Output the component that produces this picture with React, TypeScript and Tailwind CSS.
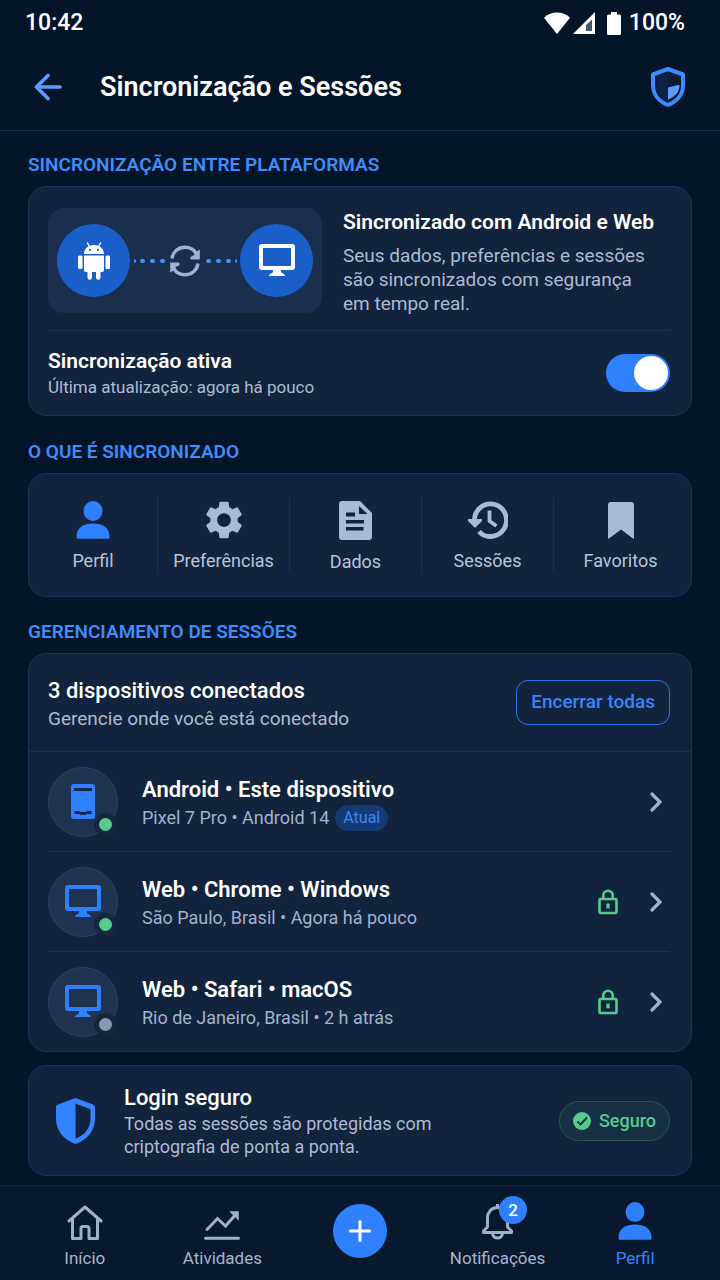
import { useState } from "react";
import type { ReactNode } from "react";

const BackIcon = () => (
  <svg width="28" height="28" viewBox="0 0 28 28" fill="none" stroke="#5a9cff" strokeWidth="3.600" strokeLinecap="round" strokeLinejoin="round">
    <path d="M26 14H3M14 2.500L2.500 14 14 25.500" />
  </svg>
);

const HeaderShieldIcon = () => (
  <svg width="34" height="40" viewBox="0 0 34 40">
    <path d="M17 2L32 7.500v11c0 9-6 16-15 19.500C8 34.500 2 27.500 2 18.500v-11z" fill="#0a1c37" stroke="#3a8cff" strokeWidth="4" strokeLinejoin="round" />
    <path d="M17 6.500v27c-7-3.200-11-8-11-15V10.300z" fill="#0c2247" />
    <path d="M17 20.500l11.500-2.800c0 7.500-4 11.300-11.500 15z" fill="#5b9dff" />
  </svg>
);

const ShieldIcon = () => (
  <svg width="39" height="46" viewBox="0 0 39 46">
    <path fillRule="evenodd" d="M19.500 0L37 6.500q2 .8 2 2.500v11.500C39 33 31 42 19.500 46 8 42 0 33 0 20.500V9q0-1.700 2-2.500zM19.500 5.500v35.300C29 37 34.500 30 34.500 20.500v-9.300z" fill="#3584ff" />
  </svg>
);

const WifiIcon = () => (
  <svg width="26" height="22" viewBox="0 0 26 22" fill="#fff">
    <path d="M13 22L0 5.800C4 2 8.200.5 13 .5S22 2 26 5.800z" />
  </svg>
);

const SignalIcon = () => (
  <svg width="22" height="22" viewBox="0 0 22 22">
    <path d="M22 0v22H0z" fill="#fff" />
    <path d="M19 7.500V19h-6v-6z" fill="#475568" />
  </svg>
);

const BatteryIcon = () => (
  <svg width="14" height="23" viewBox="0 0 14 23" fill="#fff">
    <path d="M4 0h6v2.500h2.500Q14 2.500 14 4v17.500q0 1.500-1.500 1.500h-11Q0 23 0 21.500V4q0-1.500 1.500-1.500H4z" />
  </svg>
);

const AndroidIcon = () => (
  <svg width="32" height="38" viewBox="0 0 32 38" fill="#fff">
    <path d="M9.500 1l2.200 4M22.500 1l-2.200 4" stroke="#fff" strokeWidth="1.500" strokeLinecap="round" />
    <path fillRule="evenodd" d="M6 12C6 6.500 10.500 3 16 3s10 3.500 10 9zM12 6.800a1.100 1.100 0 100 2.200 1.100 1.100 0 000-2.200zM20 6.800A1.100 1.100 0 1020 9a1.100 1.100 0 000-2.200z" />
    <path d="M6 13.500h20V28q0 2-2 2h-1.500v5.500a2.200 2.200 0 01-4.500 0V30h-4v5.500a2.200 2.200 0 01-4.500 0V30H8q-2 0-2-2z" />
    <rect x="0" y="13.500" width="4.500" height="13.500" rx="1.500" />
    <rect x="27.500" y="13.500" width="4.500" height="13.500" rx="1.500" />
  </svg>
);

const MonitorIcon = ({ color }: { color: string }) => (
  <svg width="36" height="33" viewBox="0 0 36 33" fill="none">
    <rect x="2" y="2" width="32" height="22" rx="1" stroke={color} strokeWidth="4" strokeLinejoin="round" />
    <path d="M14 25h8v2.500q0 1.500 2 2 2 .5 2 2.500H10q0-2 2-2.500 2-.5 2-2z" fill={color} />
  </svg>
);

const PhoneIcon = () => (
  <svg width="24" height="35" viewBox="0 0 24 35">
    <rect width="24" height="35" rx="3" fill="#2f80fd" />
    <rect x="3" y="4" width="18" height="3" fill="#12294d" />
    <path d="M3.500 27h4l2 1h5l2-1h4v3h-5l-1 1h-5l-1-1h-5z" fill="#12294d" />
  </svg>
);

const SyncIcon = () => (
  <svg width="32" height="32" viewBox="0 0 32 32" fill="none" stroke="#9fb2d6" strokeWidth="3.400">
    <path d="M3 13.500C4 6.500 9.500 2.300 16 2.300c4.800 0 8.800 2.200 11 5.800M29 18.500c-1 7-6.500 11.200-13 11.200-4.800 0-8.800-2.200-11-5.800" />
    <path d="M30.800 4.500v10H22q-1.200-1.500 0-3l3.500-1.500-.5-2zM1.200 27.500v-10H10q1.200 1.500 0 3L6.500 22l.5 2z" fill="#9fb2d6" stroke="none" />
  </svg>
);

const DottedLine = ({ flip = false }: { flip?: boolean }) => (
  <svg width="32" height="6" viewBox="0 0 32 6" className={flip ? "rotate-180" : ""}>
    <path d="M0 3h0M8 3h1M18 3h1M28 3h1" stroke="#4a8ff5" strokeWidth="4" strokeLinecap="round" />
  </svg>
);

const PersonIcon = ({ color }: { color: string }) => (
  <svg width="34" height="38" viewBox="0 0 34 38" fill={color}>
    <ellipse cx="17" cy="10" rx="9.500" ry="10" />
    <path d="M.5 37v-2C.5 27 7.500 22.500 17 22.500S33.500 27 33.500 35v2q0 .8-1 .8H1.500q-1 0-1-.8z" />
  </svg>
);

const GearIcon = () => (
  <svg width="38" height="38" viewBox="2 2 20 20" fill="#aab9d6">
    <path d="M19.140 12.940c.040-.300.060-.610.060-.940 0-.320-.020-.640-.070-.940l2.030-1.580c.180-.140.230-.410.120-.610l-1.920-3.320c-.120-.220-.370-.290-.590-.220l-2.390.960c-.500-.380-1.030-.700-1.620-.940l-.360-2.540c-.040-.240-.240-.410-.480-.410h-3.840c-.240 0-.430.170-.470.410l-.360 2.540c-.590.240-1.130.570-1.620.940l-2.390-.960c-.220-.080-.470 0-.590.220L2.740 8.870c-.120.210-.080.470.120.610l2.030 1.580c-.050.300-.090.630-.090.940s.020.640.070.940l-2.030 1.580c-.180.140-.230.410-.120.610l1.920 3.320c.120.220.370.290.590.220l2.390-.960c.500.380 1.030.700 1.620.940l.360 2.540c.050.240.240.410.480.410h3.840c.240 0 .440-.170.470-.410l.360-2.540c.590-.240 1.130-.560 1.620-.940l2.390.960c.220.080.470 0 .590-.220l1.920-3.320c.120-.220.070-.470-.120-.610zM12 15.600c-1.980 0-3.600-1.620-3.600-3.600s1.620-3.600 3.600-3.600 3.600 1.620 3.600 3.600-1.620 3.600-3.600 3.600" />
  </svg>
);

const DocumentIcon = () => (
  <svg width="33" height="39" viewBox="0 0 33 39" fill="#aab9d6">
    <path fillRule="evenodd" d="M3 0h18L33 12v24q0 3-3 3H3q-3 0-3-3V3q0-3 3-3zM20 5v8h8.500zM7 11.500v4h9v-4zM7 19v3.600h18V19zM7 26v3.600h17.500V26z" />
  </svg>
);

const HistoryIcon = () => (
  <svg width="40" height="38" viewBox="0 0 40 38" fill="none" stroke="#aab9d6" strokeWidth="4.800">
    <path d="M6.500 19A16 16.300 0 1122 35.500c-4.500 0-8-1.600-11-5" />
    <path d="M21.500 9.500V20l7 5" strokeWidth="3.800" />
    <path d="M0 18h14v2l-6.500 6.500h-1L0 20z" fill="#aab9d6" stroke="none" />
  </svg>
);

const BookmarkIcon = () => (
  <svg width="26" height="37" viewBox="0 0 26 37" fill="#aab9d6">
    <path d="M3 0h20q3 0 3 3v33q0 1.200-1 .6L13 27.500 1 36.600Q0 37.200 0 36V3q0-3 3-3z" />
  </svg>
);

const ChevronIcon = () => (
  <svg width="12" height="20" viewBox="0 0 12 20" fill="none" stroke="#a3b2cc" strokeWidth="3.200" strokeLinecap="round">
    <path d="M2 2l8 8-8 8" />
  </svg>
);

const LockIcon = () => (
  <svg width="20" height="26" viewBox="0 0 20 26" fill="none" stroke="#55cc8b" strokeWidth="2.600">
    <rect x="1.500" y="10" width="17" height="14" rx="1" />
    <path d="M5.200 10V6.500a4.800 4.800 0 019.600 0V10" />
    <rect x="8.200" y="14.500" width="3.600" height="5" rx="1" fill="#55cc8b" stroke="none" />
  </svg>
);

const CheckIcon = () => (
  <svg width="18" height="18" viewBox="0 0 18 18">
    <circle cx="9" cy="9" r="9" fill="#55cc8b" />
    <path d="M4.500 9.500l3 3 6.500-7" fill="none" stroke="#1a3345" strokeWidth="2" />
  </svg>
);

const HomeIcon = () => (
  <svg width="36" height="35" viewBox="0 0 36 35" fill="none" stroke="#a0afcb" strokeWidth="3" strokeLinejoin="round" strokeLinecap="round">
    <path d="M2 16L18 2l16 14M5.500 14v19.500H14V23.500q0-2 2-2h4q2 0 2 2v10h8.500V14" />
  </svg>
);

const ActivityIcon = () => (
  <svg width="36" height="30" viewBox="0 0 36 30" fill="none" stroke="#a0afcb" strokeWidth="3" strokeLinecap="round">
    <path d="M3 19.500L13.500 8.500l8 7.500L33 3M1.500 28.300h33" />
    <path d="M27 2h7v7z" fill="#a0afcb" strokeWidth="1.500" />
  </svg>
);

const BellIcon = () => (
  <svg width="31" height="36" viewBox="0 0 31 36" fill="none" stroke="#a0afcb" strokeWidth="3" strokeLinejoin="round">
    <path d="M15.500 3.500C9 3.500 5.500 8.500 5.500 14v9l-4 4v1.500h28V27l-4-4v-9c0-5.500-3.500-10.500-10-10.500z" />
    <path d="M10.500 29.500c.5 3 2.500 4.500 5 4.500s4.500-1.500 5-4.500M15.500 0v4" />
  </svg>
);

const PlusIcon = () => (
  <svg width="22" height="22" viewBox="0 0 22 22" stroke="#fff" strokeWidth="3" strokeLinecap="round">
    <path d="M11 1.500v19M1.500 11h19" />
  </svg>
);

const categories = [
  { label: "Perfil", icon: <PersonIcon color="#2f80fd" /> },
  { label: "Preferências", icon: <GearIcon /> },
  { label: "Dados", icon: <DocumentIcon /> },
  { label: "Sessões", icon: <HistoryIcon /> },
  { label: "Favoritos", icon: <BookmarkIcon /> },
];

const sessions = [
  {
    title: "Android • Este dispositivo",
    detail: "Pixel 7 Pro • Android 14",
    icon: <PhoneIcon />,
    current: true,
    online: true,
  },
  {
    title: "Web • Chrome • Windows",
    detail: "São Paulo, Brasil • Agora há pouco",
    icon: <MonitorIcon color="#2f80fd" />,
    current: false,
    online: true,
  },
  {
    title: "Web • Safari • macOS",
    detail: "Rio de Janeiro, Brasil • 2 h atrás",
    icon: <MonitorIcon color="#2f80fd" />,
    current: false,
    online: false,
  },
];

const SectionTitle = ({ children }: { children: ReactNode }) => (
  <h2 className="mb-[9px] text-[19px] leading-6 font-semibold text-[#3f8cfb] uppercase">
    {children}
  </h2>
);

const NavItem = ({
  label,
  active = false,
  children,
}: {
  label: string;
  active?: boolean;
  children: ReactNode;
}) => (
  <a
    href="#"
    className={`flex flex-1 flex-col items-center text-[17px] leading-6 ${
      active ? "text-[#3584ff]" : "text-[#a7b5cf]"
    }`}
  >
    <span className="flex h-9 items-end">{children}</span>
    <span className="mt-[6px]">{label}</span>
  </a>
);

const App = () => {
  const [syncEnabled, setSyncEnabled] = useState(true);

  return (
    <div className="flex min-h-screen flex-col bg-[#051529] font-[Roboto,sans-serif] text-white">
      <div className="flex h-11 items-center justify-between pt-[2px] pr-[35px] pl-[25px] text-[23px] font-medium">
        <span>10:42</span>
        <div className="flex items-center">
          <WifiIcon />
          <span className="ml-[3px]">
            <SignalIcon />
          </span>
          <span className="mr-2 ml-3">
            <BatteryIcon />
          </span>
          <span>100%</span>
        </div>
      </div>

      <header className="flex h-[87px] items-center border-b border-[#15304f] pr-[35px] pl-[34px]">
        <button type="button" aria-label="Voltar">
          <BackIcon />
        </button>
        <h1 className="ml-[38px] flex-1 text-[27px] font-semibold">
          Sincronização e Sessões
        </h1>
        <button type="button" aria-label="Segurança">
          <HeaderShieldIcon />
        </button>
      </header>

      <main className="flex flex-col px-7 pt-[22px] pb-[9px]">
        <SectionTitle>Sincronização entre plataformas</SectionTitle>
        <section className="mb-6 rounded-[18px] border border-[#1b3353] bg-[#11233d] pr-[21px] pl-[19px]">
          <div className="flex items-start gap-[21px] border-b border-[#1b3353] pt-[21px] pb-[14px]">
            <div className="flex h-[105px] w-[274px] items-center justify-between rounded-2xl bg-[#1a2f4e] px-[9px]">
              <span className="flex size-[73px] items-center justify-center rounded-full bg-[#1a5fc8]">
                <AndroidIcon />
              </span>
              <DottedLine />
              <SyncIcon />
              <DottedLine flip />
              <span className="flex size-[73px] items-center justify-center rounded-full bg-[#1a5fc8]">
                <MonitorIcon color="#fff" />
              </span>
            </div>
            <div className="flex-1">
              <h3 className="text-[21px] leading-7 font-semibold">
                Sincronizado com Android e Web
              </h3>
              <p className="mt-2 text-[19px] leading-6 text-[#aebbd3]">
                Seus dados, preferências e sessões
                <br />
                são sincronizados com segurança
                <br />
                em tempo real.
              </p>
            </div>
          </div>
          <div className="flex h-[84px] items-center justify-between">
            <label htmlFor="sync">
              <span className="block text-[21px] leading-7 font-semibold">
                Sincronização ativa
              </span>
              <span className="block text-[17px] leading-6 text-[#aebbd3]">
                Última atualização: agora há pouco
              </span>
            </label>
            <input
              id="sync"
              type="checkbox"
              role="switch"
              checked={syncEnabled}
              onChange={(e) => setSyncEnabled(e.target.checked)}
              className="h-[38px] w-16 appearance-none rounded-full bg-[#33486a] p-[2px] before:block before:size-[34px] before:rounded-full before:bg-white checked:bg-[#2f80fd] checked:before:ml-auto"
            />
          </div>
        </section>

        <SectionTitle>O que é sincronizado</SectionTitle>
        <section className="mb-[23px] grid grid-cols-[129fr_132fr_132fr_132fr_133fr] rounded-[18px] border border-[#1b3353] bg-[#11233d] py-[23px] pr-1">
          {categories.map((category) => (
            <button
              key={category.label}
              type="button"
              className="flex h-[76px] flex-col items-center border-r border-[#1b3353] pt-1 text-[18px] leading-6 text-[#b8c5dc] last:border-r-0"
            >
              <span className="flex h-10 items-center">{category.icon}</span>
              <span className="mt-[10px]">{category.label}</span>
            </button>
          ))}
        </section>

        <SectionTitle>Gerenciamento de sessões</SectionTitle>
        <section className="mb-[13px] rounded-[18px] border border-[#1b3353] bg-[#11233d]">
          <div className="flex h-[98px] items-center justify-between border-b border-[#1b3353] pr-[21px] pl-[19px]">
            <div className="pt-1">
              <h3 className="text-[22px] leading-7 font-medium">
                3 dispositivos conectados
              </h3>
              <p className="text-[19px] leading-7 text-[#aebbd3]">
                Gerencie onde você está conectado
              </p>
            </div>
            <button
              type="button"
              className="h-[45px] rounded-xl border border-[#2a74e5] px-[14px] text-[19px] font-medium text-[#3a86fb]"
            >
              Encerrar todas
            </button>
          </div>
          <ul className="pr-[21px] pl-[19px]">
            {sessions.map((session) => (
              <li
                key={session.title}
                className="border-b border-[#1b3353] last:border-b-0"
              >
                <button
                  type="button"
                  className="flex h-[99px] w-full items-center text-left"
                >
                  <span className="relative flex size-[70px] items-center justify-center rounded-full border border-[#2b4262] bg-[#1f3351]">
                    {session.icon}
                    {/* online / offline dot */}
                    <span
                      className={`absolute right-0 bottom-0 size-[23px] rounded-full border-5 border-[#15273f] ${
                        session.online ? "bg-[#55cc8b]" : "bg-[#8b99b5]"
                      }`}
                    />
                  </span>
                  <span className="ml-6 flex-1 pt-1">
                    <span className="block text-[22px] leading-7 font-semibold">
                      {session.title}
                    </span>
                    <span className="flex items-center text-[18px] leading-7 text-[#a3b2cd]">
                      {session.detail}
                      {session.current && (
                        <span className="ml-[6px] rounded-full bg-[#143a72] px-2 text-[16px] leading-[26px] text-[#3a86fb]">
                          Atual
                        </span>
                      )}
                    </span>
                  </span>
                  {!session.current && <LockIcon />}
                  <span className="mr-2 ml-8">
                    <ChevronIcon />
                  </span>
                </button>
              </li>
            ))}
          </ul>
        </section>

        <section className="flex h-[111px] items-center rounded-[18px] border border-[#1b3353] bg-[#11233d] pr-[21px] pl-[27px]">
          <ShieldIcon />
          <div className="ml-[29px] flex-1">
            <h3 className="text-[22px] leading-7 font-medium">Login seguro</h3>
            <p className="text-[18px] leading-[23px] text-[#aebbd3]">
              Todas as sessões são protegidas com
              <br />
              criptografia de ponta a ponta.
            </p>
          </div>
          <span className="flex h-10 items-center gap-2 rounded-full border border-[#23584f] bg-[#172f44] px-[13px] text-[18px] font-medium text-[#55cc8b]">
            <CheckIcon />
            Seguro
          </span>
        </section>
      </main>

      <nav className="mt-auto flex h-[95px] border-t border-[#0f2440] bg-[#08182f] px-4 pt-[18px]">
        <NavItem label="Início">
          <HomeIcon />
        </NavItem>
        <NavItem label="Atividades">
          <ActivityIcon />
        </NavItem>
        <div className="flex flex-1 justify-center">
          <button
            type="button"
            aria-label="Adicionar"
            className="flex size-[54px] items-center justify-center rounded-full bg-[#2f80fd]"
          >
            <PlusIcon />
          </button>
        </div>
        <NavItem label="Notificações">
          <span className="relative">
            <BellIcon />
            <span className="absolute -top-2 left-[17px] flex size-7 items-center justify-center rounded-full bg-[#2f80fd] text-[17px] font-medium text-white">
              2
            </span>
          </span>
        </NavItem>
        <NavItem label="Perfil" active>
          <PersonIcon color="#2f80fd" />
        </NavItem>
      </nav>
    </div>
  );
};

export default App;
